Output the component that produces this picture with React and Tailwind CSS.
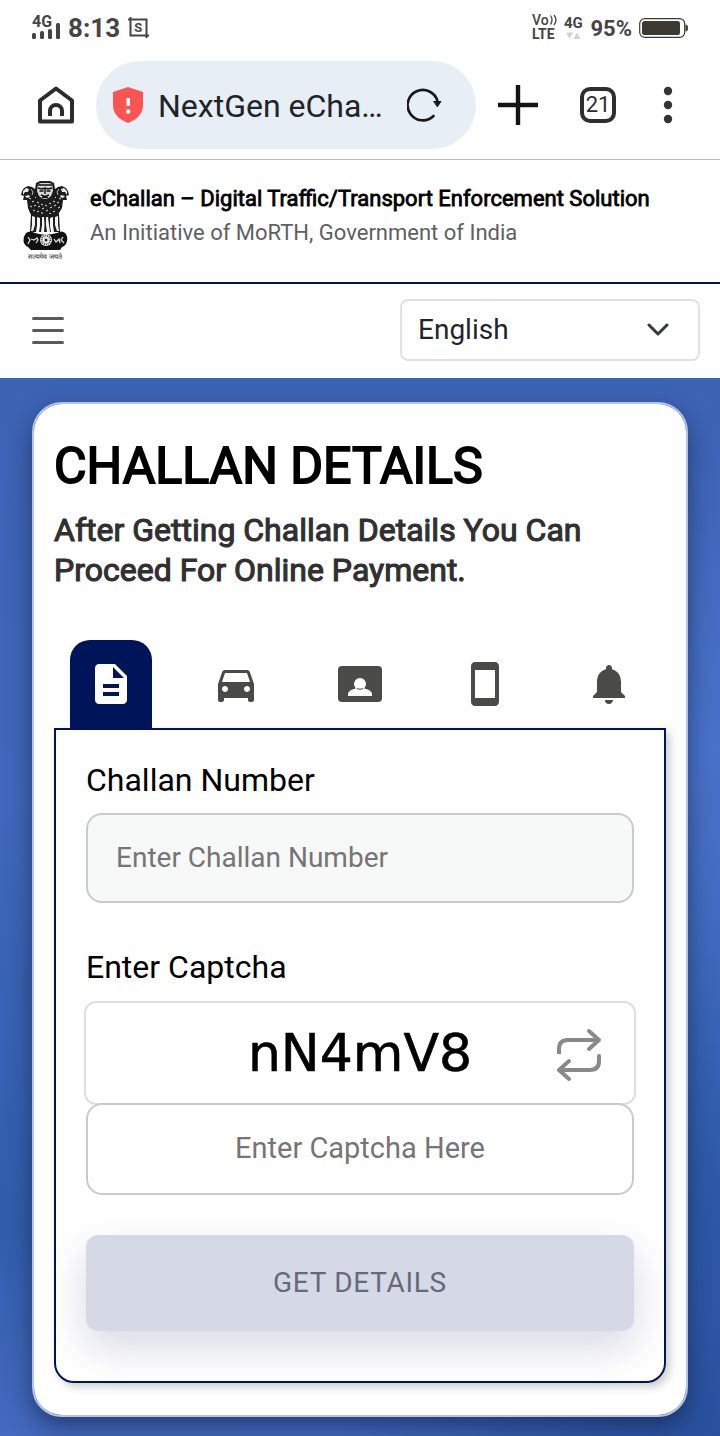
import { MdDescription, MdDirectionsCar, MdStayCurrentPortrait, MdNotifications } from 'react-icons/md'

export default function App() {
  return (
    <div className="min-h-screen bg-white font-[Roboto,sans-serif] text-black">
      <StatusBar />
      <BrowserBar />
      <SiteHeader />
      <NavRow />
      <main className="bg-[radial-gradient(circle_at_100%_35%,#4a72cb_0%,transparent_30%),radial-gradient(circle_at_100%_100%,#28509d_0%,transparent_30%),linear-gradient(to_bottom,#3d63b5,#4068bc_40%,#315dac_80%,#446abf)] px-8 pt-6 pb-5">
        <ChallanCard />
      </main>
    </div>
  )
}

function StatusBar() {
  return (
    <div className="flex h-14 items-center justify-between px-8 text-[#454545]">
      <div className="flex items-center gap-2">
        <SignalIcon />
        <span className="text-[26px] font-bold leading-8">8:13</span>
        <ScreenshotIcon />
      </div>
      <div className="flex items-center gap-[7px]">
        <VolteIcon />
        <DataIcon />
        <span className="pt-0.5 text-[22px] font-bold leading-8">95%</span>
        <BatteryIcon />
      </div>
    </div>
  )
}

function BrowserBar() {
  return (
    <div className="flex h-26 items-center border-b border-[#bdbdbd] pr-12 pl-[38px] pb-1.5">
      <button aria-label="Home">
        <HomeIcon />
      </button>
      <div className="mx-[22px] flex h-22 min-w-0 flex-1 items-center rounded-full bg-[#e7eef6] pr-[34px] pl-4">
        <ShieldIcon />
        <span className="ml-3.5 flex-1 truncate pt-0.5 text-[32px] leading-10 text-[#202427]">NextGen eCha…</span>
        <button aria-label="Reload">
          <ReloadIcon />
        </button>
      </div>
      <button aria-label="New tab">
        <svg width="40" height="40" viewBox="0 0 40 40" stroke="#141414" strokeWidth="4.4">
          <path d="M20 0v40M0 20h40" />
        </svg>
      </button>
      <button className="ml-[42px] flex size-9 items-center justify-center rounded-[10px] border-4 border-[#2e2e2e] text-[22px] text-[#2e2e2e]">
        21
      </button>
      <button aria-label="Menu" className="ml-12">
        <svg width="8" height="38" viewBox="0 0 8 38" fill="#333" className="overflow-visible">
          <circle cx="4" cy="5" r="4.2" />
          <circle cx="4" cy="19" r="4.2" />
          <circle cx="4" cy="33" r="4.2" />
        </svg>
      </button>
    </div>
  )
}

function SiteHeader() {
  return (
    <header className="flex h-31 items-start gap-5 border-b-2 border-[#00145a] px-5 pt-[21px]">
      <Emblem />
      <div>
        <p className="text-[22px] leading-9 [-webkit-text-stroke:0.8px_black]">
          eChallan – Digital Traffic/Transport Enforcement Solution
        </p>
        <p className="text-[22px] leading-8 text-[#5c5f63]">An Initiative of MoRTH, Government of India</p>
      </div>
    </header>
  )
}

function NavRow() {
  return (
    <nav className="flex h-[94px] items-center justify-between pr-5 pb-0.5 pl-8">
      <button aria-label="Open menu" className="flex w-8 flex-col gap-[9px]">
        <span className="h-[3px] w-full rounded bg-[#5b5b5b]" />
        <span className="h-[3px] w-full rounded bg-[#5b5b5b]" />
        <span className="h-[3px] w-full rounded bg-[#5b5b5b]" />
      </button>
      <div className="relative">
        <select
          aria-label="Language"
          className="block h-[62px] w-75 appearance-none rounded-lg border-2 border-[#dee2e6] bg-white px-4 text-[28px] text-[#212529]"
        >
          <option>English</option>
        </select>
        <svg
          className="pointer-events-none absolute top-6 right-[31px]"
          width="22"
          height="14"
          viewBox="0 0 22 14"
          fill="none"
          stroke="#343a40"
          strokeWidth="3"
          strokeLinecap="round"
          strokeLinejoin="round"
        >
          <path d="M2 2l9 9 9-9" />
        </svg>
      </div>
    </nav>
  )
}

const tabs = [
  { label: 'Challan', icon: MdDescription },
  { label: 'Vehicle', icon: MdDirectionsCar },
  { label: 'Licence', icon: LicenceIcon },
  { label: 'Mobile', icon: MdStayCurrentPortrait },
  { label: 'Notice', icon: MdNotifications },
]

function ChallanCard() {
  return (
    <section className="rounded-[30px] border-2 border-[#b4c3e6] bg-white bg-clip-padding px-5 pt-7 pb-8 shadow-[0_10px_24px_rgba(15,25,60,0.55)]">
      <h1 className="text-[50px] leading-17 font-normal [-webkit-text-stroke:1.8px_black]">CHALLAN DETAILS</h1>
      <h2 className="mt-2.5 text-[32px] leading-10 font-normal text-[#303030] [-webkit-text-stroke:1.1px_#303030]">
        After Getting Challan Details You Can Proceed For Online Payment.
      </h2>

      {/* Search type tabs */}
      <div className="mt-[50px] flex justify-between px-4">
        {tabs.map(({ label, icon: Icon }, i) => (
          <button
            key={label}
            aria-label={label}
            className={`flex h-22 w-[82px] items-center justify-center ${
              i === 0 ? 'rounded-t-[20px] bg-[#00145a] text-white' : 'text-[#4a4a48]'
            }`}
          >
            <Icon className="size-12" />
          </button>
        ))}
      </div>

      <form className="rounded-b-[20px] border-2 border-[#00145a] px-7 pt-7 pb-[50px] shadow-[4px_4px_8px_rgba(0,0,0,0.2)]">
        <div className="px-0.5">
          <label htmlFor="challan" className="block text-[32px] leading-11">
            Challan Number
          </label>
          <input
            id="challan"
            placeholder="Enter Challan Number"
            className="mt-[11px] h-[90px] w-full rounded-2xl border-2 border-[#cacaca] bg-[#f7f9f8] px-7 pb-0.5 text-[28px] placeholder:text-[#757575]"
          />
          <label htmlFor="captcha" className="mt-[42px] block text-[32px] leading-11">
            Enter Captcha
          </label>
        </div>
        <div className="mt-3 flex h-[104px] items-center rounded-xl border-2 border-[#dedede] pr-8">
          <span className="ml-[78px] flex-1 text-center font-['DejaVu_Sans',sans-serif] text-[52px] leading-none [-webkit-text-stroke:0.6px_black]">
            nN4mV8
          </span>
          <button type="button" aria-label="Refresh captcha">
            <RepeatIcon />
          </button>
        </div>
        <div className="px-0.5">
          <input
            id="captcha"
            placeholder="Enter Captcha Here"
            className="-mt-0.5 block h-[92px] w-full rounded-2xl border-2 border-[#cacaca] bg-white px-7 pb-0.5 text-center text-[29px] placeholder:text-[#757575]"
          />
          <button
            type="button"
            disabled
            className="mt-10 h-24 w-full rounded-xl bg-[#d5d9e6] text-[28px] tracking-wide text-[#656a79] shadow-[0_16px_40px_rgba(0,20,90,0.16)]"
          >
            GET DETAILS
          </button>
        </div>
      </form>
    </section>
  )
}

function SignalIcon() {
  return (
    <svg width="28" height="30" viewBox="0 0 28 30" fill="currentColor" className="overflow-visible">
      <text x="0" y="14" fontSize="16" fontWeight="700">4G</text>
      <rect x="0" y="20" width="4" height="6" rx="1.5" />
      <rect x="8" y="18" width="4" height="8" rx="1.5" />
      <rect x="16" y="16" width="4" height="10" rx="1.5" />
      <rect x="24" y="10" width="4" height="16" rx="1.5" />
    </svg>
  )
}

function ScreenshotIcon() {
  return (
    <svg width="21" height="22" viewBox="0 0 21 22" fill="none" stroke="currentColor" strokeWidth="2">
      <path d="M2.500 0v18.500H21M0 2.500h18.500V21" />
      <text x="6.300" y="15" fontSize="13" fontWeight="700" fill="currentColor" stroke="none">S</text>
    </svg>
  )
}

function VolteIcon() {
  return (
    <svg width="25" height="30" viewBox="0 0 25 30" fill="currentColor" className="overflow-visible">
      <text x="0" y="12" fontSize="14" fontWeight="500">Vo</text>
      <path d="M18.500 2.500q3 4.500 0 9M22 2q4 5 0 10" fill="none" stroke="currentColor" strokeWidth="1.300" />
      <text x="0" y="26" fontSize="14" fontWeight="700">LTE</text>
    </svg>
  )
}

function DataIcon() {
  return (
    <svg width="19" height="30" viewBox="0 0 19 30" fill="currentColor" className="overflow-visible">
      <text x="0" y="15" fontSize="15" fontWeight="700">4G</text>
      <path d="M2 19.500h7l-3.500 6zM9.500 26h7L13 19.500z" fill="#d2d2d2" />
    </svg>
  )
}

function BatteryIcon() {
  return (
    <svg width="49" height="20" viewBox="0 0 49 20">
      <rect x="0.700" y="0.700" width="45" height="18.600" rx="5" fill="none" stroke="#3b3b36" strokeWidth="1.200" />
      <rect x="3" y="3" width="38" height="14" rx="2.500" fill="#3b3b34" />
      <path d="M46.500 6.500q2.500 0 2.500 3.500t-2.500 3.500z" fill="#3b3b36" />
    </svg>
  )
}

function HomeIcon() {
  return (
    <svg width="36" height="38" viewBox="0 0 36 38" fill="none" stroke="#2c2c2c" strokeWidth="4" strokeLinejoin="round">
      <path d="M2 14.500 18 2.500l16 12V35.500H2z" />
      <path d="M12 30v-5a6 6 0 0 1 12 0v5" />
    </svg>
  )
}

function ShieldIcon() {
  return (
    <svg width="32" height="38" viewBox="0 0 32 38" className="shrink-0">
      <path d="M16 1 31 6v13c0 9-6 14.500-15 18C7 33.500 1 28 1 19V6z" fill="#fb5553" />
      <path d="M16.200 12v8" stroke="#fff" strokeWidth="3.500" />
      <circle cx="16.200" cy="25.500" r="2.200" fill="#fff" />
    </svg>
  )
}

function ReloadIcon() {
  return (
    <svg width="35" height="36" viewBox="0 0 35 36" fill="none" stroke="#17191c" strokeWidth="2.600" strokeLinecap="round">
      <path d="M26.500 29A15.200 15.200 0 1 1 30.600 14.500" />
      <path d="M27 14.500h7l-3.500 5z" fill="#17191c" strokeWidth="1" strokeLinejoin="round" />
    </svg>
  )
}

function LicenceIcon({ className }) {
  return (
    <svg viewBox="0 0 24 24" fill="currentColor" className={className}>
      <rect x="1" y="3" width="22" height="18" rx="2" />
      <circle cx="12" cy="12" r="3" fill="#fff" />
      <path d="M6 18v-1c0-2 4-3 6-3s6 1 6 3v1z" fill="#fff" />
      <path d="M10.500 14.300q1.500.7 3 0" fill="none" stroke="currentColor" strokeWidth=".5" />
    </svg>
  )
}

function RepeatIcon() {
  return (
    <svg width="46" height="58" viewBox="0 -4 46 58" fill="none" stroke="#898989" strokeWidth="4" strokeLinejoin="round" className="block">
      <path d="M3 26v-5q0-9 9-9h31" />
      <path d="M33 3l10 9-10 9" strokeLinecap="round" />
      <path d="M43 28v5q0 9-9 9H3" strokeLinecap="round" />
      <path d="M13 33L3 42l10 9" strokeLinecap="round" />
    </svg>
  )
}

function Emblem() {
  return (
    <svg width="50" height="80" viewBox="0 0 50 80" className="shrink-0" aria-label="State Emblem of India">
      {/* manes and bodies */}
      <path
        d="M2 10l2-3 4-2 4 1 3 2 1-6 4-2h10l4 2 1 6 3-2 4-1 4 2 2 3 1 4-3 1 1 4-4 0-1 8-3 5-2 4H13l-3-4-2-5-1-8-4 0 1-4-3-1z"
        fill="#1c1c1c"
      />
      <path
        d="M9 17l2 1M12 21l2-1M10 25l2 1M14 25l2-1M13 29l2 1M17 21l2 1M18 26l2-1M17 31l2-1M21 23l2 1M22 28l2-1M25 24l2 1M26 30l2-1M29 22l2 1M30 27l2-1M33 20l2 1M34 25l2-1M33 31l2-1M37 22l2-1M38 27l2-1M39 17l2 1M21 32l2 0M29 33l2-1M15 16l1 1M35 16l1 1"
        stroke="#e4e4e4"
        strokeWidth="1"
      />
      {/* side faces */}
      <path d="M3 10l3-3 3 1-1 3-3 0-2 3zM47 10l-3-3-3 1 1 3 3 0 2 3zM5 15l4-1 1 2-3 1zM45 15l-4-1-1 2 3 1z" fill="#e8e8e8" />
      <path d="M11 8l2 3-1 3M39 8l-2 3 1 3" stroke="#ccc" strokeWidth=".9" fill="none" />
      {/* centre face */}
      <path d="M18 3l3-1h8l3 1 1 7-2 5-4 3h-4l-4-3-2-5z" fill="#d8d8d8" />
      <path d="M18 4h14M18 7l4 1 3-1 3 1 4-1M19.500 10h4M26.500 10h4M25 8v5M21 14l4 1.500 4-1.500M22 16.500h6" stroke="#111" strokeWidth="1.400" fill="none" />
      {/* legs */}
      <path d="M11 33h28l1 18H10z" fill="#1c1c1c" />
      <path
        d="M12 35l3 1v8l-2 6h-2l1-6zM17 36l3 1v8l-1 6h-3l1-7zM22 36h2l.5 8-.5 7h-3l1-7zM26 36h2l1 8 1 7h-3l-1-7zM33 36l-3 1v8l1 6h3l-1-7zM38 35l-3 1v8l2 6h2l-1-6z"
        fill="#f4f4f4"
      />
      {/* abacus with the wheel */}
      <path d="M6 52q4-3 9 0 10 3 22 0 5-3 8 0 3 3 2 8t-5 6l-2 3H11l-3-3q-4-2-4.500-6T6 52z" fill="#111" />
      <circle cx="26" cy="59" r="6" fill="#f1f1f1" />
      <circle cx="26" cy="59" r="4.300" fill="none" stroke="#444" strokeWidth="1.800" strokeDasharray="1 .9" />
      <circle cx="26" cy="59" r="1.500" fill="#222" />
      <path d="M8 56l2 3-2 4M11 58l3 1 3-2 1 2-2 3M34 58l2 3 3-3 1 4M43 56l-2 3 3 3" stroke="#ddd" strokeWidth="1.300" fill="none" />
      <text x="25" y="78" fontSize="7" textAnchor="middle" fill="#222">
        सत्यमेव जयते
      </text>
    </svg>
  )
}
